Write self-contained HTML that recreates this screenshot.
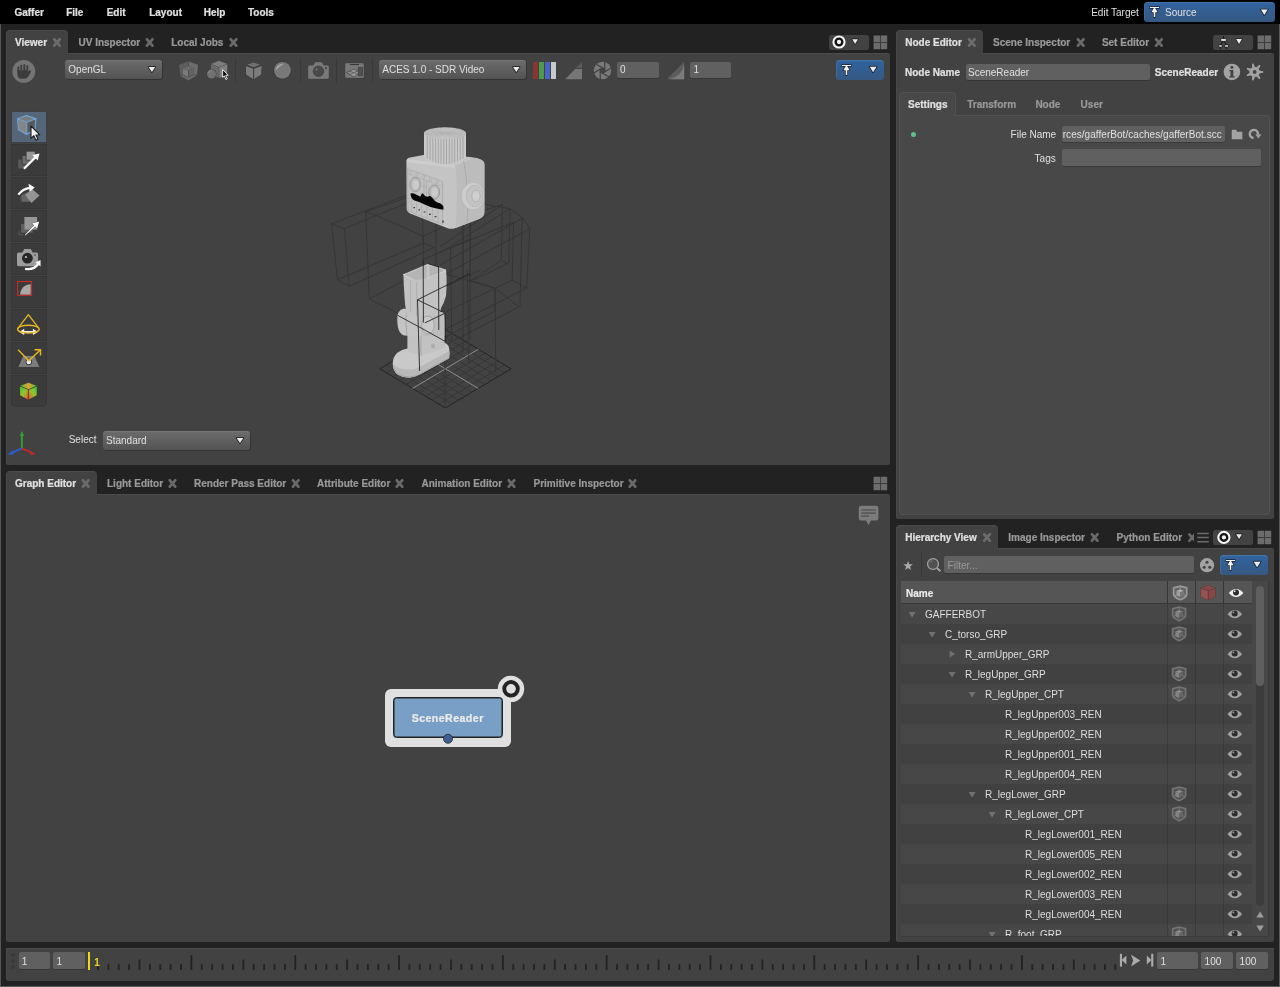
<!DOCTYPE html><html><head><meta charset="utf-8"><title>Gaffer</title><style>
*{box-sizing:border-box;margin:0;padding:0}
html,body{width:1280px;height:987px;overflow:hidden;background:#222;}
body{position:relative;font-family:"Liberation Sans",sans-serif;font-size:10px;color:#e0e0e0;line-height:12px;-webkit-font-smoothing:antialiased}
.a{position:absolute}
.b{font-weight:bold;-webkit-text-stroke:.22px currentColor}
.t{position:absolute;white-space:nowrap;height:12px;line-height:12px}
.panel{position:absolute;background:#424242;border-top:1px solid #4b4b4b;border-left:1px solid #494949}
.tab{position:absolute;background:#424242;border-radius:4px 4px 0 0;height:24px;border-top:1px solid #4a4a4a;border-left:1px solid #494949}
.fade{color:#999}
.fld{position:absolute;background:#606060;border-radius:2px;box-shadow:0 1px 0 rgba(0,0,0,.18)}
.dd{position:absolute;border-radius:3px;background:linear-gradient(#6b6b6b,#535353);border-top:1px solid #767676;box-shadow:1px 1px 0 rgba(0,0,0,.22)}
.blue{position:absolute;border-radius:3.5px;background:linear-gradient(#30629e,#365982);border-top:1px solid #4675aa;box-shadow:inset 1px 0 0 rgba(90,130,180,.35)}
.mini{position:absolute;background:#434343;border-radius:2.5px}
svg{position:absolute;overflow:visible}
</style></head><body><div id="root" style="position:absolute;left:0;top:0;width:1280px;height:987px;will-change:transform">
<div class="a" style="left:0;top:24px;width:1px;height:963px;background:#575757"></div>
<div class="a" style="left:1279px;top:24px;width:1px;height:963px;background:#5a5a5a"></div>
<div class="a" style="left:0;top:986px;width:1280px;height:1px;background:#5a5a5a"></div>
<div class="a" style="left:0;top:0;width:1280px;height:24px;background:#000"></div>
<div class="t b" style="left:14.4px;top:7px;">Gaffer</div>
<div class="t b" style="left:66.2px;top:7px;">File</div>
<div class="t b" style="left:106.7px;top:7px;">Edit</div>
<div class="t b" style="left:149.2px;top:7px;">Layout</div>
<div class="t b" style="left:203.7px;top:7px;">Help</div>
<div class="t b" style="left:248px;top:7px;">Tools</div>
<div class="t " style="left:1091.2px;top:7px;">Edit Target</div>
<div class="blue" style="left:1144px;top:2px;width:131px;height:20px"></div>
<svg style="left:1149px;top:6px" width="11" height="12" viewBox="0 0 11 12"><path d="M.9 .9H10.1V2.1H6.1L8.65 6.2H6.25V10.9H4.75V6.2H2.35L4.9 2.1H.9Z" fill="#f4f4f4" stroke="#1a2230" stroke-width="1.5" stroke-linejoin="round" paint-order="stroke"/></svg>
<div class="t " style="left:1165px;top:7px;">Source</div>
<svg style="left:1260px;top:9px" width="6.8" height="5.5" viewBox="-0.9 -0.6 6.8 5.5"><path d="M0 0H6.8L3.4 5.5Z" fill="#ececec" stroke="rgba(24,24,24,.75)" stroke-width="1.8" stroke-linejoin="round" paint-order="stroke"/></svg>
<div class="panel" style="left:6px;top:53px;width:884px;height:412px;border-radius:0 2.5px 2.5px 2px"></div>
<div class="tab" style="left:6px;top:30px;width:62.3px"></div>
<div class="panel" style="left:6px;top:494px;width:884px;height:448px;border-radius:0 2.5px 2.5px 2px"></div>
<div class="tab" style="left:6px;top:471px;width:90.5px"></div>
<div class="panel" style="left:896px;top:53px;width:378px;height:466px;border-radius:0 2.5px 2.5px 2px"></div>
<div class="tab" style="left:896px;top:30px;width:87px"></div>
<div class="panel" style="left:896px;top:548px;width:378px;height:394px;border-radius:0 2.5px 2.5px 2px"></div>
<div class="tab" style="left:896px;top:525px;width:101.6px"></div>
<div class="panel" style="left:6px;top:948px;width:1268px;height:33px;border-radius:0 0 3px 3px"></div>
<div class="t b" style="left:15px;top:37px;">Viewer</div>
<svg style="left:52px;top:37px" width="8.2" height="9.2" viewBox="-0.9 -0.9 8.2 9.2"><path d="M1.35 1.45L6.85 7.75M6.85 1.45L1.35 7.75" stroke="#6c6c6c" stroke-width="2.8" stroke-linecap="round"/></svg>
<div class="t b fade" style="left:78.5px;top:37px;">UV Inspector</div>
<svg style="left:145px;top:37px" width="8.2" height="9.2" viewBox="-0.6 -0.9 8.2 9.2"><path d="M1.35 1.45L6.85 7.75M6.85 1.45L1.35 7.75" stroke="#6a6a6a" stroke-width="2.8" stroke-linecap="round"/></svg>
<div class="t b fade" style="left:171.2px;top:37px;">Local Jobs</div>
<svg style="left:229px;top:37px" width="8.2" height="9.2" viewBox="-0.4 -0.9 8.2 9.2"><path d="M1.35 1.45L6.85 7.75M6.85 1.45L1.35 7.75" stroke="#6a6a6a" stroke-width="2.8" stroke-linecap="round"/></svg>
<div class="t b" style="left:15px;top:478px;">Graph Editor</div>
<svg style="left:81px;top:478px" width="8.2" height="9.2" viewBox="-0.6 -0.9 8.2 9.2"><path d="M1.35 1.45L6.85 7.75M6.85 1.45L1.35 7.75" stroke="#6c6c6c" stroke-width="2.8" stroke-linecap="round"/></svg>
<div class="t b fade" style="left:107px;top:478px;">Light Editor</div>
<svg style="left:168px;top:478px" width="8.2" height="9.2" viewBox="-0.4 -0.9 8.2 9.2"><path d="M1.35 1.45L6.85 7.75M6.85 1.45L1.35 7.75" stroke="#6a6a6a" stroke-width="2.8" stroke-linecap="round"/></svg>
<div class="t b fade" style="left:194px;top:478px;">Render Pass Editor</div>
<svg style="left:291px;top:478px" width="8.2" height="9.2" viewBox="-0.6 -0.9 8.2 9.2"><path d="M1.35 1.45L6.85 7.75M6.85 1.45L1.35 7.75" stroke="#6a6a6a" stroke-width="2.8" stroke-linecap="round"/></svg>
<div class="t b fade" style="left:317px;top:478px;">Attribute Editor</div>
<svg style="left:395px;top:478px" width="8.2" height="9.2" viewBox="-0.4 -0.9 8.2 9.2"><path d="M1.35 1.45L6.85 7.75M6.85 1.45L1.35 7.75" stroke="#6a6a6a" stroke-width="2.8" stroke-linecap="round"/></svg>
<div class="t b fade" style="left:421.5px;top:478px;">Animation Editor</div>
<svg style="left:507px;top:478px" width="8.2" height="9.2" viewBox="-0.4 -0.9 8.2 9.2"><path d="M1.35 1.45L6.85 7.75M6.85 1.45L1.35 7.75" stroke="#6a6a6a" stroke-width="2.8" stroke-linecap="round"/></svg>
<div class="t b fade" style="left:533.5px;top:478px;">Primitive Inspector</div>
<svg style="left:628px;top:478px" width="8.2" height="9.2" viewBox="-0.4 -0.9 8.2 9.2"><path d="M1.35 1.45L6.85 7.75M6.85 1.45L1.35 7.75" stroke="#6a6a6a" stroke-width="2.8" stroke-linecap="round"/></svg>
<div class="t b" style="left:905.2px;top:37px;">Node Editor</div>
<svg style="left:967px;top:37px" width="8.2" height="9.2" viewBox="-0.7 -0.9 8.2 9.2"><path d="M1.35 1.45L6.85 7.75M6.85 1.45L1.35 7.75" stroke="#6c6c6c" stroke-width="2.8" stroke-linecap="round"/></svg>
<div class="t b fade" style="left:993px;top:37px;">Scene Inspector</div>
<svg style="left:1076px;top:37px" width="8.2" height="9.2" viewBox="-0.6 -0.9 8.2 9.2"><path d="M1.35 1.45L6.85 7.75M6.85 1.45L1.35 7.75" stroke="#6a6a6a" stroke-width="2.8" stroke-linecap="round"/></svg>
<div class="t b fade" style="left:1101.9px;top:37px;">Set Editor</div>
<svg style="left:1154px;top:37px" width="8.2" height="9.2" viewBox="-0.8 -0.9 8.2 9.2"><path d="M1.35 1.45L6.85 7.75M6.85 1.45L1.35 7.75" stroke="#6a6a6a" stroke-width="2.8" stroke-linecap="round"/></svg>
<div class="t b" style="left:905.2px;top:532px;">Hierarchy View</div>
<svg style="left:982px;top:532px" width="8.2" height="9.2" viewBox="-0.9 -0.9 8.2 9.2"><path d="M1.35 1.45L6.85 7.75M6.85 1.45L1.35 7.75" stroke="#6c6c6c" stroke-width="2.8" stroke-linecap="round"/></svg>
<div class="t b fade" style="left:1008.3px;top:532px;">Image Inspector</div>
<svg style="left:1090px;top:532px" width="8.2" height="9.2" viewBox="-0.6 -0.9 8.2 9.2"><path d="M1.35 1.45L6.85 7.75M6.85 1.45L1.35 7.75" stroke="#6a6a6a" stroke-width="2.8" stroke-linecap="round"/></svg>
<div class="t b fade" style="left:1116.5px;top:532px;">Python Editor</div>
<div class="a" style="left:1188px;top:532.9px;width:5.9px;height:9.2px;overflow:hidden"><svg style="left:0;top:0" width="8.2" height="9.2" viewBox="0 0 8.2 9.2"><path d="M1.35 1.45L6.85 7.75M6.85 1.45L1.35 7.75" stroke="#6a6a6a" stroke-width="2.6" stroke-linecap="round"/></svg></div>
<div class="mini" style="left:829px;top:35px;width:40px;height:15px"></div>
<svg style="left:832px;top:35px" width="14" height="14" viewBox="-7 -7 14 14"><circle r="5.55" fill="#131313" stroke="#f8f8f8" stroke-width="2.1"/><circle r="2.15" fill="#f4f4f4"/></svg>
<svg style="left:852px;top:39px" width="5.8" height="4.7" viewBox="-0.2 -0.2 5.8 4.7"><path d="M0 0H5.8L2.9 4.7Z" fill="#ececec" stroke="rgba(24,24,24,.75)" stroke-width="1.8" stroke-linejoin="round" paint-order="stroke"/></svg>
<svg style="left:873px;top:35px" width="14" height="14" viewBox="-0.6 -0.6 14 14"><path d="M0 0H6.4V6.6H0ZM7.2 0H13.6V6.6H7.2ZM0 7.4H6.4V13.6H0ZM7.2 7.4H13.6V13.6H7.2Z" fill="#6c6c6c"/><path d="M6.8 0V13.6M0 7H13.6" stroke="#6c6c6c" stroke-opacity=".3" stroke-width=".8"/></svg>
<svg style="left:873px;top:476px" width="14" height="14" viewBox="-0.6 -0.7 14 14"><path d="M0 0H6.4V6.6H0ZM7.2 0H13.6V6.6H7.2ZM0 7.4H6.4V13.6H0ZM7.2 7.4H13.6V13.6H7.2Z" fill="#6c6c6c"/><path d="M6.8 0V13.6M0 7H13.6" stroke="#6c6c6c" stroke-opacity=".3" stroke-width=".8"/></svg>
<div class="mini" style="left:1213px;top:35px;width:40px;height:15px"></div>
<svg style="left:1236px;top:39px" width="5.9" height="4.8" viewBox="-0.1 -0.1 5.9 4.8"><path d="M0 0H5.9L2.95 4.8Z" fill="#ececec" stroke="rgba(24,24,24,.75)" stroke-width="1.8" stroke-linejoin="round" paint-order="stroke"/></svg>
<svg style="left:1257px;top:35px" width="14" height="14" viewBox="-0.6 -0.6 14 14"><path d="M0 0H6.4V6.6H0ZM7.2 0H13.6V6.6H7.2ZM0 7.4H6.4V13.6H0ZM7.2 7.4H13.6V13.6H7.2Z" fill="#6c6c6c"/><path d="M6.8 0V13.6M0 7H13.6" stroke="#6c6c6c" stroke-opacity=".3" stroke-width=".8"/></svg>
<div class="mini" style="left:1213px;top:530px;width:40px;height:15px"></div>
<svg style="left:1216px;top:530px" width="14" height="14" viewBox="-7.9 -7.4 14 14"><circle r="5.55" fill="#131313" stroke="#f8f8f8" stroke-width="2.1"/><circle r="2.15" fill="#f4f4f4"/></svg>
<svg style="left:1236px;top:534px" width="5.9" height="4.8" viewBox="-0.1 -0.2 5.9 4.8"><path d="M0 0H5.9L2.95 4.8Z" fill="#ececec" stroke="rgba(24,24,24,.75)" stroke-width="1.8" stroke-linejoin="round" paint-order="stroke"/></svg>
<svg style="left:1257px;top:530px" width="14" height="14" viewBox="-0.6 -0.7 14 14"><path d="M0 0H6.4V6.6H0ZM7.2 0H13.6V6.6H7.2ZM0 7.4H6.4V13.6H0ZM7.2 7.4H13.6V13.6H7.2Z" fill="#6c6c6c"/><path d="M6.8 0V13.6M0 7H13.6" stroke="#6c6c6c" stroke-opacity=".3" stroke-width=".8"/></svg>
<svg style="left:1197px;top:532px" width="12" height="12" viewBox="-0.2 0 12 12"><path d="M0 1.6H11.6M0 5.6H11.6M0 9.7H11.6" stroke="#6c6c6c" stroke-width="1.5"/></svg>
<svg style="left:1216px;top:34px" width="16" height="17" viewBox="1216 34 16 17"><g stroke="#131313" stroke-width=".9"><path d="M1223.5 36.1V38.1M1222.6 41.8L1220.8 44.2M1224.4 41.8L1226.3 44.2M1220.45 47.8V48.9M1226.55 47.8V48.9" stroke-width="1" fill="none"/><rect x="1220.7" y="38.6" width="5.6" height="2.7" rx=".7" fill="#fafafa"/><rect x="1218.75" y="44.65" width="3.4" height="2.7" rx=".6" fill="#cdcdcd"/><rect x="1224.65" y="44.65" width="3.8" height="2.7" rx=".6" fill="#cdcdcd"/></g></svg>
<svg style="left:12px;top:59px" width="23" height="23" viewBox="-11.8 -12.42 23 23"><circle r="11.4" fill="#747474"/>
<g fill="#3c3c3c"><rect x="-6.4" y="-5.2" width="1.8" height="7" rx=".9"/><rect x="-3.4" y="-6.7" width="1.8" height="8" rx=".9"/><rect x="-.4" y="-7.5" width="1.8" height="9" rx=".9"/><rect x="2.6" y="-6.4" width="1.8" height="8" rx=".9"/>
<path d="M-6.4 -1.2H4.4V1.4L5 -.4Q5.9 -1.6 6.8 -.9Q7.5 -.2 6.8 1L4.8 4.6Q3.4 7.4 .6 7.4H-2Q-6.4 7.2 -6.4 2.6Z"/></g></svg>
<div class="dd" style="left:65px;top:60px;width:97px;height:19px"></div>
<div class="t " style="left:68.3px;top:63.6px;">OpenGL</div>
<svg style="left:148px;top:66px" width="6.6" height="5.2" viewBox="-0.6 -0.9 6.6 5.2"><path d="M0 0H6.6L3.3 5.2Z" fill="#ececec" stroke="rgba(24,24,24,.75)" stroke-width="1.8" stroke-linejoin="round" paint-order="stroke"/></svg>
<svg style="left:174px;top:56px" width="60" height="30" viewBox="174 56 60 30">
<path d="M178.9 64.9L188 61.5V66L182.9 68.4V74.5L180.6 75.7Z" fill="#5e5e5e"/>
<path d="M198.1 64.7L188.7 61.5V66L193.7 68.4V74.5L197 74.75Z" fill="#6c6c6c"/>
<path d="M180.6 76.1L182.9 74.9L188.3 77.5L193.7 74.9L197 75.2L188.3 80.5Z" fill="#696969"/>
<path d="M182.9 68.4L188.3 66.1L193.7 68.4L188.3 70.4Z" fill="#6b6b6b"/>
<path d="M182.9 68.7L188.1 70.6V77L182.9 74.4Z" fill="#7a7a7a"/>
<path d="M193.7 68.7L188.6 70.6V77L193.7 74.4Z" fill="#636363"/>
<path d="M219 60.7L227.4 64L219 66.9L211 64Z" fill="#7c7c7c"/>
<path d="M211 64.4L218.7 67.2V77.9L211.4 74.8Z" fill="#6b6b6b"/>
<path d="M227.4 64.4L219.3 67.2V77.9L227 74.8Z" fill="#818181"/>
<circle cx="211.5" cy="74.1" r="5.1" fill="#424242"/><circle cx="211.5" cy="74.1" r="4.5" fill="#727272"/>
<path d="M208.4 72.6Q209.2 70.6 211.2 70.2" stroke="#8e8e8e" stroke-width=".9" fill="none" stroke-linecap="round"/>
<path d="M222.6 69.6V77.4L224.3 75.9L225.9 79.5L227.3 78.9L225.7 75.3L228.3 75.2Z" fill="#101010" stroke="#f2f2f2" stroke-width=".9" stroke-linejoin="round"/>
</svg>
<div class="a" style="left:235px;top:58px;width:1px;height:25px;background:#393939"></div>
<div class="a" style="left:300px;top:58px;width:1px;height:25px;background:#393939"></div>
<div class="a" style="left:336px;top:58px;width:1px;height:25px;background:#393939"></div>
<div class="a" style="left:372px;top:58px;width:1px;height:25px;background:#393939"></div>
<svg style="left:240px;top:56px" width="60" height="30" viewBox="240 56 60 30">
<path d="M253.6 62L261.9 65.2L261.5 74.9L253.6 79.8L245.7 74.9L245.4 65.2Z" fill="#3b3b3b" opacity=".8"/>
<path d="M253.6 62.6L260.4 64.8L253.6 67.3L247 64.8Z" fill="#707070"/>
<path d="M245.9 66L253.1 68.7V79L246.1 74.5Z" fill="#7c7c7c"/>
<path d="M261.6 66L254.1 68.7V79L261.1 74.5Z" fill="#7c7c7c"/>
<circle cx="282.4" cy="70.3" r="8.9" fill="#3a3a3a" opacity=".7"/><circle cx="282.4" cy="70.3" r="8.4" fill="#797979"/>
<path d="M276 69.9Q276.6 64.6 283.2 64Q278.8 66.6 276 69.9Z" fill="#adadad" stroke="#a4a4a4" stroke-width=".7"/>
</svg>
<svg style="left:304px;top:56px" width="64" height="32" viewBox="304 56 64 32">
<path d="M309.6 65.2H313.2L315.2 62H321.8L323.8 65.2H327.4Q329 65.2 329 66.8V77.4Q329 79 327.4 79H309.6Q308 79 308 77.4V66.8Q308 65.2 309.6 65.2Z" fill="#797979" stroke="#3a3a3a" stroke-opacity=".5" stroke-width=".6"/>
<circle cx="318.5" cy="71.3" r="5.3" fill="#494949" stroke="#3d3d3d" stroke-width=".7"/>
<path d="M316.5 68.6V70.4M315.6 69.5H317.4" stroke="#8a8a8a" stroke-width=".8"/>
<rect x="325.1" y="67.1" width="1.9" height="1.9" fill="#454545"/>
<rect x="345" y="63" width="19" height="15" rx="1.5" fill="#787878" stroke="#3a3a3a" stroke-opacity=".5" stroke-width=".6"/>
<path d="M350 64.5H359" stroke="#363636" stroke-width="1.1"/>
<path d="M346.4 72.5L354 69.3L360 72.5L354 76.7Z" fill="#8e8e8e" stroke="#444" stroke-width=".8"/>
<path d="M350.2 70.9L357 74.6M350.2 74.6L357 70.9" stroke="#4a4a4a" stroke-width=".8"/>
<path d="M354 69.3L357 70.9L354 72.6L350.2 70.9ZM354 72.6L357 74.6L354 76.7L350.2 74.6Z" fill="#a2a2a2" opacity=".5"/>
<rect x="358.3" y="67.3" width="4.4" height="8.4" fill="#505050" stroke="#414141" stroke-width=".7"/>
</svg>
<div class="dd" style="left:379px;top:60px;width:147px;height:19px"></div>
<div class="t " style="left:382.3px;top:63.6px;">ACES 1.0 - SDR Video</div>
<svg style="left:513px;top:66px" width="6.6" height="5.2" viewBox="0 -0.9 6.6 5.2"><path d="M0 0H6.6L3.3 5.2Z" fill="#ececec" stroke="rgba(24,24,24,.75)" stroke-width="1.8" stroke-linejoin="round" paint-order="stroke"/></svg>
<div class="a" style="left:533.1px;top:61.8px;width:5px;height:17.3px;background:#893535"></div>
<div class="a" style="left:539.1px;top:61.8px;width:5px;height:17.3px;background:#4b9b4b"></div>
<div class="a" style="left:545.1px;top:61.8px;width:5px;height:17.3px;background:#4a63c6"></div>
<div class="a" style="left:551.1px;top:61.8px;width:5px;height:17.3px;background:#c9c9c9"></div>
<svg style="left:565px;top:61px" width="17" height="17.4" viewBox="-0.2 -0.8 17 17.4"><path d="M16.8 0V6.3H10.7Z" fill="#5a5a5a"/><path d="M9.9 7.1H16.8V17.4H0Z" fill="#767676"/></svg>
<svg style="left:593px;top:61px" width="17.5" height="17.5" viewBox="-9.5 -9.5 17.5 17.5"><circle r="8.75" fill="#7a7a7a"/><path d="M2.31 -1.39L2.36 1.31L0.05 2.70L-2.31 1.39L-2.36 -1.31L-0.05 -2.70Z" fill="#444"/><path d="M2.36 1.31L2.19 -8.63M0.05 2.70L8.57 -2.42M-2.31 1.39L6.38 6.21M-2.36 -1.31L-2.19 8.63M-0.05 -2.70L-8.57 2.42M2.31 -1.39L-6.38 -6.21" stroke="#414141" stroke-width="1.15" fill="none"/></svg>
<div class="fld" style="left:617px;top:61.7px;width:41.5px;height:16.4px"></div>
<div class="t " style="left:620px;top:64px;">0</div>
<svg style="left:666px;top:61px" width="17.4" height="17.4" viewBox="-0.8 -0.8 17.4 17.4"><path d="M17.4 0V17.4H0Z" fill="#5c5c5c"/><path d="M17.4 2.4V17.4H3Q15 14.6 17.4 2.4Z" fill="#7b7b7b"/></svg>
<div class="fld" style="left:690px;top:61.7px;width:41.3px;height:16.4px"></div>
<div class="t " style="left:693.6px;top:64px;">1</div>
<div class="blue" style="left:836px;top:60px;width:48px;height:20px"></div>
<svg style="left:841px;top:64px" width="11" height="12" viewBox="0 0 11 12"><path d="M.9 .9H10.1V2.1H6.1L8.65 6.2H6.25V10.9H4.75V6.2H2.35L4.9 2.1H.9Z" fill="#f4f4f4" stroke="#1a2230" stroke-width="1.5" stroke-linejoin="round" paint-order="stroke"/></svg>
<svg style="left:869px;top:66px" width="6.8" height="5.5" viewBox="-0.7 -0.7 6.8 5.5"><path d="M0 0H6.8L3.4 5.5Z" fill="#ececec" stroke="rgba(24,24,24,.75)" stroke-width="1.8" stroke-linejoin="round" paint-order="stroke"/></svg>
<div class="a" style="left:11.3px;top:111.20px;width:35.4px;height:31.5px;background:#546678;border-radius:2.5px 2.5px 1px 1px;box-shadow:inset 0 0 0 .8px #363636"></div>
<div class="a" style="left:11.3px;top:144.20px;width:35.4px;height:31.5px;background:#3b3b3b;border-radius:1px;box-shadow:inset 0 0 0 .8px #363636"></div>
<div class="a" style="left:11.3px;top:177.20px;width:35.4px;height:31.5px;background:#3b3b3b;border-radius:1px;box-shadow:inset 0 0 0 .8px #363636"></div>
<div class="a" style="left:11.3px;top:210.20px;width:35.4px;height:31.5px;background:#3b3b3b;border-radius:1px;box-shadow:inset 0 0 0 .8px #363636"></div>
<div class="a" style="left:11.3px;top:243.20px;width:35.4px;height:31.5px;background:#3b3b3b;border-radius:1px;box-shadow:inset 0 0 0 .8px #363636"></div>
<div class="a" style="left:11.3px;top:276.20px;width:35.4px;height:31.5px;background:#3b3b3b;border-radius:1px;box-shadow:inset 0 0 0 .8px #363636"></div>
<div class="a" style="left:11.3px;top:309.20px;width:35.4px;height:31.5px;background:#3b3b3b;border-radius:1px;box-shadow:inset 0 0 0 .8px #363636"></div>
<div class="a" style="left:11.3px;top:342.20px;width:35.4px;height:31.5px;background:#3b3b3b;border-radius:1px;box-shadow:inset 0 0 0 .8px #363636"></div>
<div class="a" style="left:11.3px;top:375.20px;width:35.4px;height:31.5px;background:#3b3b3b;border-radius:1px 1px 5px 5px;box-shadow:inset 0 0 0 .8px #363636"></div>
<svg style="left:11px;top:111px" width="36" height="32" viewBox="-0.3 -0.2 36 32"><path d="M15 4.4L24.6 7.4L15.4 11L6.2 7.6Z" fill="#7a7a7a"/><path d="M6.2 7.6L15.4 11V23.4L7.2 18.6Z" fill="#858585"/><path d="M24.6 7.4L15.4 11V23.4L23.8 18.4Z" fill="#5a5a5a"/>
<path d="M15 4.4L24.6 7.4L23.8 18.4L15.4 23.4L7.2 18.6L6.2 7.6ZM6.2 7.6L15.4 11L24.6 7.4M15.4 11V23.4" fill="none" stroke="#70a2d2" stroke-width="1.2" stroke-linejoin="round"/>
<g transform="translate(19.7 14.8) scale(1.1)"><path d="M0 0V11.2L2.6 8.8L4.5 12.9L6.3 12.1L4.5 8.2L8 8Z" fill="#fafafa" stroke="#1c1c1c" stroke-width="1" stroke-linejoin="round"/></g></svg>
<svg style="left:11px;top:144px" width="36" height="32" viewBox="-0.3 -0.2 36 32"><rect x="6.8" y="15.4" width="8.8" height="8.8" fill="#5a5a5a"/><rect x="10.8" y="11.2" width="8.8" height="8.8" fill="#6e6e6e" stroke="#3b3b3b" stroke-width=".8"/><rect x="14.8" y="7" width="9" height="9" fill="#979797" stroke="#3b3b3b" stroke-width=".8"/><g transform="translate(28.2 9.2)"><path d="M0 0L-7.2 1.6L-5.2 3.4L-16.4 14.6L-14.8 16.2L-3.6 5L-1.8 7Z" fill="#fafafa"/></g></svg>
<svg style="left:11px;top:177px" width="36" height="32" viewBox="-0.3 -0.2 36 32"><path d="M9 20.6L14.6 16L18.4 24.8L9.6 24.8Z" fill="#555"/><path d="M10 18L17 14.6L20.6 24L11.2 24.2Z" fill="#666"/><path d="M14 17.9L20.7 11.7L28.3 18.4L20.1 25.7Z" fill="#959595"/>
<path d="M7.1 17.5Q11.2 11.4 18.8 10.6" fill="none" stroke="#fafafa" stroke-width="2.2"/><path d="M17.2 6.6L23.4 10.4L18.4 14.6Z" fill="#fafafa"/></svg>
<svg style="left:11px;top:210px" width="36" height="32" viewBox="-0.3 -0.2 36 32"><path d="M7.7 20.9V24.5H12.1" fill="none" stroke="#595959" stroke-width="1"/><path d="M9.7 13.9H13.1V19.5H21.4V22.5H9.7Z" fill="#606060"/><rect x="13.1" y="6.8" width="12.7" height="12.7" fill="#979797"/>
<path d="M27.9 11.4L20.6 13.4L22.8 15L13.5 24.7L14 25.2L24.2 16.4L25.8 18.6Z" fill="#fafafa" stroke="#2e2e2e" stroke-width=".7" stroke-linejoin="round" paint-order="stroke"/></svg>
<svg style="left:11px;top:243px" width="36" height="32" viewBox="-0.3 -0.2 36 32"><path d="M7.3 9.3H11.1L12.9 5.7H19.5L21.3 9.3H25.2Q26.8 9.3 26.8 10.9V21.4Q26.8 23 25.2 23H7.3Q5.7 23 5.7 21.4V10.9Q5.7 9.3 7.3 9.3Z" fill="#9c9c9c"/><circle cx="16.1" cy="15" r="5.4" fill="#262626"/><rect x="13.8" y="13" width="1.7" height="1.7" fill="#ddd"/><rect x="22.9" y="11" width="1.6" height="1.6" fill="#5a5a5a"/>
<path d="M13.8 25.6Q22 27.4 27.2 20.6" fill="none" stroke="#fafafa" stroke-width="2.3"/><path d="M24 19.4L29.2 16.9L29.3 23.4Z" fill="#fafafa"/></svg>
<svg style="left:11px;top:276px" width="36" height="32" viewBox="-0.3 -0.2 36 32"><path d="M8.8 18.55A10.6 10.6 0 0 1 19.4 7.95V18.55Z" fill="#a8a8a8"/><rect x="6.25" y="5.35" width="14" height="13.8" fill="none" stroke="#c42c2c" stroke-width="1.1"/></svg>
<svg style="left:11px;top:309px" width="36" height="32" viewBox="-0.3 -0.2 36 32"><path d="M12 22.7H22.4" stroke="#fafafa" stroke-width="1.7"/><path d="M7.9 22.7L12.9 19.5V25.9ZM26.6 22.7L21.6 19.5V25.9Z" fill="#fafafa"/>
<path d="M6.6 19.1L17.1 5.5L27.6 19.1" fill="none" stroke="#e8b820" stroke-width="1.3" stroke-linejoin="round"/><ellipse cx="17.1" cy="19.95" rx="10.8" ry="3.9" fill="none" stroke="#e8b820" stroke-width="1.35"/></svg>
<svg style="left:11px;top:342px" width="36" height="32" viewBox="-0.3 -0.2 36 32"><path d="M12 13.9H23.2L28.1 24.9H7Z" fill="#7c7c7c"/><circle cx="17.5" cy="19.7" r="2.9" fill="#ececec" stroke="#2c2c2c" stroke-width="1"/>
<path d="M6.8 7.6L17.5 18.6L29 7.8" fill="none" stroke="#e8b820" stroke-width="1.4" stroke-linejoin="round"/><path d="M23.2 7.6H29.2V13.3" fill="none" stroke="#e8b820" stroke-width="1.4"/></svg>
<svg style="left:11px;top:375px" width="36" height="32" viewBox="-0.3 -0.2 36 32"><defs><linearGradient id="vg1" x1="0" y1="0" x2="1" y2="1"><stop offset="0" stop-color="#30c838"/><stop offset=".5" stop-color="#9cc032"/><stop offset="1" stop-color="#ee4a26"/></linearGradient><linearGradient id="vg2" x1="1" y1="0" x2="0" y2="1"><stop offset="0" stop-color="#30c838"/><stop offset=".5" stop-color="#9cc032"/><stop offset="1" stop-color="#ee4a26"/></linearGradient><linearGradient id="vg3" x1="0" y1="0" x2="1" y2="0"><stop offset="0" stop-color="#48c436"/><stop offset=".5" stop-color="#e0a432"/><stop offset="1" stop-color="#48c436"/></linearGradient></defs>
<path d="M17.1 7.6L25.6 10.9L17.1 14.4L8.6 10.9Z" fill="url(#vg3)"/><path d="M8.6 11L17.1 14.4V24.6L8.8 20Z" fill="url(#vg1)"/><path d="M25.6 11L17.1 14.4V24.6L25.4 20Z" fill="url(#vg2)"/><path d="M8.6 10.9L17.1 14.4L25.6 10.9M17.1 14.4V24.6" fill="none" stroke="#2a2a2a" stroke-width=".8" opacity=".75"/></svg>
<div class="t " style="left:68.7px;top:433.6px;">Select</div>
<div class="dd" style="left:103px;top:431px;width:147px;height:19px"></div>
<div class="t " style="left:106px;top:434.6px;">Standard</div>
<svg style="left:236px;top:437px" width="6.6" height="5.2" viewBox="-0.7 -0.9 6.6 5.2"><path d="M0 0H6.6L3.3 5.2Z" fill="#ececec" stroke="rgba(24,24,24,.75)" stroke-width="1.8" stroke-linejoin="round" paint-order="stroke"/></svg>
<svg style="left:0;top:420px" width="50" height="45" viewBox="0 420 50 45"><path d="M21.9 448.4V434" stroke="#2ea02e" stroke-width="2"/><path d="M21.9 431L24.2 436H19.6Z" fill="#2ea02e"/>
<path d="M21.9 448.4L11 453.2" stroke="#2a5cd8" stroke-width="2"/><path d="M7.6 454.8L12.6 450.6L13.8 454.6Z" fill="#2a5cd8"/>
<path d="M21.9 448.4L32.6 453.2" stroke="#c02828" stroke-width="2"/><path d="M36 454.8L30.8 450.8L30 454.8Z" fill="#c02828"/></svg>
<svg style="left:300px;top:100px" width="260" height="330" viewBox="300 100 260 330"><path d="M379.8 368.8L445.3 408.0" fill="none" stroke="#242424" stroke-width="1"/><path d="M379.8 368.8L445.6 329.6" fill="none" stroke="#242424" stroke-width="1"/><path d="M386.4 364.9L451.9 404.1" fill="none" stroke="#333" stroke-width="0.8"/><path d="M386.4 372.7L452.2 333.5" fill="none" stroke="#333" stroke-width="0.8"/><path d="M393.0 361.0L458.5 400.2" fill="none" stroke="#333" stroke-width="0.8"/><path d="M392.9 376.6L458.7 337.4" fill="none" stroke="#333" stroke-width="0.8"/><path d="M399.5 357.0L465.1 396.2" fill="none" stroke="#333" stroke-width="0.8"/><path d="M399.4 380.6L465.3 341.4" fill="none" stroke="#333" stroke-width="0.8"/><path d="M406.1 353.1L471.7 392.3" fill="none" stroke="#333" stroke-width="0.8"/><path d="M406.0 384.5L471.8 345.3" fill="none" stroke="#333" stroke-width="0.8"/><path d="M419.3 345.3L484.8 384.5" fill="none" stroke="#333" stroke-width="0.8"/><path d="M419.1 392.3L485.0 353.1" fill="none" stroke="#333" stroke-width="0.8"/><path d="M425.9 341.4L491.4 380.6" fill="none" stroke="#333" stroke-width="0.8"/><path d="M425.6 396.2L491.5 357.0" fill="none" stroke="#333" stroke-width="0.8"/><path d="M432.4 337.4L498.0 376.6" fill="none" stroke="#333" stroke-width="0.8"/><path d="M432.2 400.2L498.1 361.0" fill="none" stroke="#333" stroke-width="0.8"/><path d="M439.0 333.5L504.6 372.7" fill="none" stroke="#333" stroke-width="0.8"/><path d="M438.8 404.1L504.6 364.9" fill="none" stroke="#333" stroke-width="0.8"/><path d="M445.6 329.6L511.2 368.8" fill="none" stroke="#242424" stroke-width="1"/><path d="M445.3 408.0L511.2 368.8" fill="none" stroke="#242424" stroke-width="1"/><path d="M412.7 349.2L478.2 388.4" fill="none" stroke="#a2a2a2" stroke-width="0.8"/><path d="M412.6 388.4L478.4 349.2" fill="none" stroke="#a2a2a2" stroke-width="0.8"/><path d="M331.5 223.8L406.3 195.2" fill="none" stroke="#343434" stroke-width="0.9"/><path d="M331.5 223.8L344.3 228.6" fill="none" stroke="#343434" stroke-width="0.9"/><path d="M344.3 228.6L407.0 203.0" fill="none" stroke="#343434" stroke-width="0.9"/><path d="M331.5 223.8L337.6 279.7" fill="none" stroke="#343434" stroke-width="0.9"/><path d="M344.3 228.6L349.2 286.4" fill="none" stroke="#343434" stroke-width="0.9"/><path d="M337.6 279.7L349.2 286.4" fill="none" stroke="#343434" stroke-width="0.9"/><path d="M337.6 279.7L423.3 243.2" fill="none" stroke="#343434" stroke-width="0.9"/><path d="M349.2 286.4L434.3 247.5" fill="none" stroke="#343434" stroke-width="0.9"/><path d="M423.3 243.2L434.3 247.5" fill="none" stroke="#343434" stroke-width="0.9"/><path d="M423.3 243.2L422.0 204.0" fill="none" stroke="#343434" stroke-width="0.9"/><path d="M365.6 211.9L407.0 197.5" fill="none" stroke="#343434" stroke-width="0.9"/><path d="M365.6 211.9L369.4 299.0" fill="none" stroke="#343434" stroke-width="0.9"/><path d="M365.6 211.9L377.1 215.9L423.3 236.0" fill="none" stroke="#343434" stroke-width="0.9"/><path d="M369.4 299.0L445.0 337.0" fill="none" stroke="#343434" stroke-width="0.9"/><path d="M369.4 299.0L423.3 270.0" fill="none" stroke="#343434" stroke-width="0.9"/><path d="M423.3 236.0L423.3 330.0" fill="none" stroke="#343434" stroke-width="0.9"/><path d="M423.3 236.0L484.0 207.0" fill="none" stroke="#343434" stroke-width="0.9"/><path d="M436.0 212.0L436.0 330.0" fill="none" stroke="#343434" stroke-width="0.9"/><path d="M463.0 225.0L463.0 352.0" fill="none" stroke="#343434" stroke-width="0.9"/><path d="M470.0 222.0L470.0 340.0" fill="none" stroke="#343434" stroke-width="0.9"/><path d="M445.0 337.0L495.0 311.0L495.0 288.0" fill="none" stroke="#343434" stroke-width="0.9"/><path d="M445.0 337.0L445.0 408.0" fill="none" stroke="#343434" stroke-width="0.9"/><path d="M483.6 210.3L502.3 204.7" fill="none" stroke="#343434" stroke-width="0.9"/><path d="M484.6 204.2L509.9 208.7L522.1 217.4L529.7 228.5" fill="none" stroke="#343434" stroke-width="0.9"/><path d="M502.3 204.7L501.3 259.9" fill="none" stroke="#343434" stroke-width="0.9"/><path d="M509.9 208.7L508.9 262.9" fill="none" stroke="#343434" stroke-width="0.9"/><path d="M522.1 217.4L520.0 307.0" fill="none" stroke="#343434" stroke-width="0.9"/><path d="M529.7 228.5L526.6 288.2" fill="none" stroke="#343434" stroke-width="0.9"/><path d="M513.5 222.4L512.1 280.1" fill="none" stroke="#343434" stroke-width="0.9"/><path d="M440.0 246.7L502.3 204.7" fill="none" stroke="#343434" stroke-width="0.9"/><path d="M440.0 252.8L509.9 208.7" fill="none" stroke="#343434" stroke-width="0.9"/><path d="M440.0 265.0L522.1 218.4" fill="none" stroke="#343434" stroke-width="0.9"/><path d="M451.1 247.8L513.0 222.4" fill="none" stroke="#343434" stroke-width="0.9"/><path d="M440.0 277.0L529.7 229.0" fill="none" stroke="#343434" stroke-width="0.9"/><path d="M470.4 280.7L501.3 260.4L508.0 263.9" fill="none" stroke="#343434" stroke-width="0.9"/><path d="M470.4 280.7L477.5 278.1L508.9 262.9" fill="none" stroke="#343434" stroke-width="0.9"/><path d="M463.3 223.4L462.8 278.1" fill="none" stroke="#343434" stroke-width="0.9"/><path d="M470.4 222.4L469.9 280.7" fill="none" stroke="#343434" stroke-width="0.9"/><path d="M450.6 247.8L451.7 340.0" fill="none" stroke="#343434" stroke-width="0.9"/><path d="M467.4 270.0L468.9 363.2" fill="none" stroke="#343434" stroke-width="0.9"/><path d="M495.2 288.2L495.7 372.0" fill="none" stroke="#343434" stroke-width="0.9"/><path d="M446.1 274.1L495.2 288.2L519.0 307.0" fill="none" stroke="#343434" stroke-width="0.9"/><path d="M440.0 289.3L480.5 270.0" fill="none" stroke="#343434" stroke-width="0.9"/><path d="M440.0 314.6L512.4 280.1L526.6 288.2" fill="none" stroke="#343434" stroke-width="0.9"/><path d="M440.0 331.8L526.6 288.2" fill="none" stroke="#343434" stroke-width="0.9"/><path d="M455.2 339.9L519.0 307.0" fill="none" stroke="#343434" stroke-width="0.9"/><path d="M469.9 280.1L495.2 288.2" fill="none" stroke="#343434" stroke-width="0.9"/>
<path d="M392.8 363.8Q392.6 357.5 397 353Q401.5 349.6 408.3 348.3L443.8 342.8Q448 343 449.3 349Q449.8 354 449.1 358.3L421 373.8Q415 377 410.1 377.5Q403 378 397.5 374.6Q393.2 371 392.8 363.8Z" fill="#c9c9c9"/>
<path d="M392.8 363.8Q397 369.5 410 369.6Q416 369.4 421 366.2L449.3 351Q449.8 354 449.1 358.3L421 373.8Q415 377 410.1 377.5Q403 378 397.5 374.6Q393.2 371 392.8 363.8Z" fill="#b8b8b8"/>
<path d="M393.4 368Q397 376.6 410 377Q416 376.6 421 373.4L449 358" fill="none" stroke="#a4a4a4" stroke-width="1"/>
<path d="M407.4 318H444.6V348L421 356L407.4 351Z" fill="#c2c2c2"/><path d="M421 322V356" stroke="#a9a9a9" stroke-width="1"/>
<ellipse cx="433" cy="346" rx="2" ry="2.4" fill="#adadad"/>
<path d="M397.3 322Q396.4 310 404 308.6L421 314V336L404 335.6Q397.6 333 397.3 322Z" fill="#c4c4c4"/><path d="M406.6 309.6Q405 322 407 335.6" stroke="#a8a8a8" stroke-width="1" fill="none"/>
<path d="M421 312H444.6V336H421Z" fill="#bdbdbd"/><ellipse cx="428" cy="325" rx="6.4" ry="9" fill="#c9c9c9" stroke="#a6a6a6" stroke-width="1"/>
<path d="M403.4 274.3L428 263.8L446 269.5Q447.2 281 446 296Q444 303 441 308L440 315L407 317Q404.6 303 404.4 295Q403.6 284 403.4 274.3Z" fill="#c3c3c3"/>
<path d="M403.4 274.3Q416 283.6 446 270.4" fill="none" stroke="#dcdcdc" stroke-width="1.3"/>
<path d="M404.4 275.4L428 265L445.4 270.4Q425 279.4 416.6 280Z" fill="#b4b4b4"/>
<path d="M410.6 280V312M416.6 281.6V316" stroke="#adadad" stroke-width=".9"/>
<path d="M428 265V279" stroke="#d6d6d6" stroke-width="3" opacity=".5"/>

<path d="M406.4 162Q406 158.4 410 157.6L432 153.4L470 157Q484.4 158.6 484.4 164V212Q484.4 217 479 219L455 228.2Q451 229.6 447 228L410 213.4Q406.6 212 406.6 208Z" fill="#c4c4c4"/>
<path d="M455.6 166Q458 190 455.6 228L479 219Q484.4 217 484.4 212V164Q484 159 474 158Z" fill="#bcbcbc"/>
<path d="M407 160.6L455 166.4" stroke="#d4d4d4" stroke-width="3" opacity=".6"/>
<path d="M463.6 161Q469.6 190 467 223.6" fill="none" stroke="#a4a4a4" stroke-width=".8"/>
<path d="M424 133V156.4Q426 161.6 436 163.8Q446 165.6 456 163.6Q464 161.4 466 156.4V133Z" fill="#c9c9c9"/>
<path d="M427.3 134.2V159.0" stroke="#a2a2a2" stroke-width=".9"/><path d="M430.1 135.4V160.3" stroke="#a2a2a2" stroke-width=".9"/><path d="M432.8 136.5V161.5" stroke="#a2a2a2" stroke-width=".9"/><path d="M435.6 137.5V162.5" stroke="#a2a2a2" stroke-width=".9"/><path d="M438.3 138.2V163.3" stroke="#a2a2a2" stroke-width=".9"/><path d="M441.0 138.7V163.9" stroke="#a2a2a2" stroke-width=".9"/><path d="M443.8 139.0V164.2" stroke="#a2a2a2" stroke-width=".9"/><path d="M446.5 139.0V164.2" stroke="#a2a2a2" stroke-width=".9"/><path d="M449.3 138.7V163.9" stroke="#a2a2a2" stroke-width=".9"/><path d="M452.0 138.2V163.3" stroke="#a2a2a2" stroke-width=".9"/><path d="M454.7 137.5V162.5" stroke="#a2a2a2" stroke-width=".9"/><path d="M457.5 136.5V161.5" stroke="#a2a2a2" stroke-width=".9"/><path d="M460.2 135.4V160.3" stroke="#a2a2a2" stroke-width=".9"/><path d="M463.0 134.2V159.0" stroke="#a2a2a2" stroke-width=".9"/>
<ellipse cx="445" cy="133.2" rx="21" ry="6" fill="#c2c2c2"/><path d="M445 133.2L465.6 133.2" stroke="#b2b2b2" stroke-width=".6"/><path d="M445 133.2L464.9 134.7" stroke="#b2b2b2" stroke-width=".6"/><path d="M445 133.2L462.8 136.1" stroke="#b2b2b2" stroke-width=".6"/><path d="M445 133.2L459.6 137.3" stroke="#b2b2b2" stroke-width=".6"/><path d="M445 133.2L455.3 138.2" stroke="#b2b2b2" stroke-width=".6"/><path d="M445 133.2L450.3 138.8" stroke="#b2b2b2" stroke-width=".6"/><path d="M445 133.2L445.0 139.0" stroke="#b2b2b2" stroke-width=".6"/><path d="M445 133.2L439.7 138.8" stroke="#b2b2b2" stroke-width=".6"/><path d="M445 133.2L434.7 138.2" stroke="#b2b2b2" stroke-width=".6"/><path d="M445 133.2L430.4 137.3" stroke="#b2b2b2" stroke-width=".6"/><path d="M445 133.2L427.2 136.1" stroke="#b2b2b2" stroke-width=".6"/><path d="M445 133.2L425.1 134.7" stroke="#b2b2b2" stroke-width=".6"/><path d="M445 133.2L424.4 133.2" stroke="#b2b2b2" stroke-width=".6"/><path d="M445 133.2L425.1 131.7" stroke="#b2b2b2" stroke-width=".6"/><path d="M445 133.2L427.2 130.3" stroke="#b2b2b2" stroke-width=".6"/><path d="M445 133.2L430.4 129.1" stroke="#b2b2b2" stroke-width=".6"/><path d="M445 133.2L434.7 128.2" stroke="#b2b2b2" stroke-width=".6"/><path d="M445 133.2L439.7 127.6" stroke="#b2b2b2" stroke-width=".6"/><path d="M445 133.2L445.0 127.4" stroke="#b2b2b2" stroke-width=".6"/><path d="M445 133.2L450.3 127.6" stroke="#b2b2b2" stroke-width=".6"/><path d="M445 133.2L455.3 128.2" stroke="#b2b2b2" stroke-width=".6"/><path d="M445 133.2L459.6 129.1" stroke="#b2b2b2" stroke-width=".6"/><path d="M445 133.2L462.8 130.3" stroke="#b2b2b2" stroke-width=".6"/><path d="M445 133.2L464.9 131.7" stroke="#b2b2b2" stroke-width=".6"/>
<path d="M407.6 168.6L442.6 181.6V224.4L408 211Z" fill="#c1c1c1" stroke="#a8a8a8" stroke-width=".7"/>
<path d="M408 174L442.6 186.6M408.4 197.6L442.6 210.6" stroke="#acacac" stroke-width=".6"/>
<ellipse cx="415.2" cy="184.6" rx="5.4" ry="7.2" fill="#bdbdbd" stroke="#9a9a9a" stroke-width="1"/><ellipse cx="415.6" cy="184.6" rx="3.9" ry="5.6" fill="#cacaca" stroke="#a8a8a8" stroke-width=".7"/>
<ellipse cx="434.2" cy="192.2" rx="5.4" ry="7.2" fill="#bdbdbd" stroke="#9a9a9a" stroke-width="1"/><ellipse cx="434.6" cy="192.2" rx="3.9" ry="5.6" fill="#cacaca" stroke="#a8a8a8" stroke-width=".7"/>
<g fill="#cdcdcd" stroke="#a0a0a0" stroke-width=".6"><circle cx="410.6" cy="172.4" r="1.3"/><circle cx="417" cy="174.8" r="1.3"/><circle cx="423.6" cy="177.2" r="1.3"/><circle cx="430.2" cy="179.8" r="1.3"/><circle cx="437" cy="182.2" r="1.3"/><circle cx="424.2" cy="186" r="1.2"/></g>
<path d="M424 180V198M426.6 181V199" stroke="#aaa" stroke-width=".7"/>
<path d="M410.4 193.6Q413 192.6 416 194.6L420.4 196.8Q421.4 192.6 423 193.4Q425 197 428 196.6Q430.6 194.8 432 197.6Q434.6 201.4 437.4 202.4Q441.4 202.8 443.4 206.6V209.8L436.6 208.4Q429.6 207.4 424.6 204.6Q419 201.4 414.4 200.6Q411 199.2 410.4 193.6Z" fill="#050505"/>
<path d="M411.6 200V211.6M416.6 202V213.6M421.6 204V215.6M427 206V218M432.6 208.4V220M438 210.4V222.4" stroke="#aaa" stroke-width=".7"/>
<path d="M413.4 207.6h1.6M418.4 209.8h1.6M423.6 212h1.8M429 214.4h1.8M434.6 216.6h1.8" stroke="#3a3a3a" stroke-width="1.2"/>
<rect x="442.4" y="220.6" width="1.2" height="2" fill="#111"/>
<ellipse cx="467" cy="196.4" rx="7" ry="11.6" fill="#bababa"/><path d="M467 184.8L473 183.4V209L467 208Z" fill="#c4c4c4"/><ellipse cx="473" cy="196" rx="11" ry="13" fill="#cdcdcd"/><ellipse cx="474.6" cy="196" rx="8.4" ry="10.6" fill="#c3c3c3" stroke="#b2b2b2" stroke-width=".8"/><ellipse cx="476" cy="196" rx="4.2" ry="5.8" fill="#cecece" stroke="#adadad" stroke-width=".8"/>
<path d="M417.5 299.8L470.0 273.5" fill="none" stroke="#242424" stroke-width="0.9"/><path d="M417.5 299.8L445.1 313.2" fill="none" stroke="#242424" stroke-width="0.9"/><path d="M417.5 299.8L419.6 371.0" fill="none" stroke="#242424" stroke-width="0.9"/><path d="M424.8 322.9L445.1 313.2" fill="none" stroke="#242424" stroke-width="0.9"/><path d="M398.1 315.6L424.8 330.0L445.6 341.6" fill="none" stroke="#242424" stroke-width="0.9"/><path d="M423.2 259.7L423.4 322.6" fill="none" stroke="#242424" stroke-width="0.9"/><path d="M438.6 266.0L438.8 330.0" fill="none" stroke="#242424" stroke-width="0.9"/><path d="M423.2 259.7L470.0 239.0" fill="none" stroke="#343434" stroke-width="0.9"/><path d="M428.0 263.6L438.6 267.0" fill="none" stroke="#242424" stroke-width="0.9"/><path d="M445.1 313.2L445.4 341.0" fill="none" stroke="#242424" stroke-width="0.8"/></svg>
<svg style="left:858px;top:505px" width="20" height="20" viewBox="-0.8 -0.8 20 20"><path d="M2.4 0H17.2Q19.6 0 19.6 2.4V12.4Q19.6 14.8 17.2 14.8H12.2L9.7 19.2L7.2 14.8H2.4Q0 14.8 0 12.4V2.4Q0 0 2.4 0Z" fill="#7c7c7c"/><path d="M2.4 4.2H17M2.4 7.3H17M2.4 10.3H10.2" stroke="#5a5a5a" stroke-width="1.6"/></svg>
<div class="a" style="left:385.03px;top:689.11px;width:126.28px;height:57.80px;background:#e0e0e0;border-radius:6px"></div>
<svg style="left:497px;top:674px" width="28" height="28" viewBox="-14.03 -14.83 28 28"><circle r="13.2" fill="#e0e0e0"/><circle r="6.8" fill="#e0e0e0" stroke="#232323" stroke-width="3.9"/></svg>
<div class="a" style="left:393.19px;top:697.41px;width:109.69px;height:40.78px;background:#7a9fc6;border-radius:3.5px;border:1px solid #222;box-shadow:inset 0 0 0 .5px #222"></div>
<svg style="left:442px;top:732px" width="12" height="12" viewBox="-6.03 -6.75 12 12"><circle r="4.5" fill="#3e5f90" stroke="#222" stroke-width=".8"/></svg>
<div class="t b" style="left:410.91px;top:710.94px;height:14px;line-height:14px;font-size:10.6px;color:#ececec;width:73.55px;text-align:center;letter-spacing:.45px;transform:scaleX(1.0)">SceneReader</div>
<div class="t b" style="left:905px;top:67px;">Node Name</div>
<div class="fld" style="left:965.5px;top:63.5px;width:184.8px;height:16.5px"></div>
<div class="t " style="left:968px;top:67px;">SceneReader</div>
<div class="t b" style="left:1154.8px;top:67px;">SceneReader</div>
<svg style="left:1223px;top:63px" width="17" height="17" viewBox="-8.9 -8.95 17 17"><circle r="8.3" fill="#a3a3a3"/><circle cx="0" cy="-4.6" r="1.5" fill="#424242"/><path d="M-2.6 -2H1.4V4.2H2.8V5.6H-2.8V4.2H-1.4V-.6H-2.6Z" fill="#424242"/></svg>
<svg style="left:1245px;top:63px" width="17.4" height="17.4" viewBox="-9.6 -9 17.4 17.4"><path d="M-1.5 -4.4L-.7 -8.6H.7L1.5 -4.4Z" fill="#a3a3a3" transform="rotate(90.00)"/><path d="M-1.5 -4.4L-.7 -8.6H.7L1.5 -4.4Z" fill="#a3a3a3" transform="rotate(141.43)"/><path d="M-1.5 -4.4L-.7 -8.6H.7L1.5 -4.4Z" fill="#a3a3a3" transform="rotate(192.86)"/><path d="M-1.5 -4.4L-.7 -8.6H.7L1.5 -4.4Z" fill="#a3a3a3" transform="rotate(244.29)"/><path d="M-1.5 -4.4L-.7 -8.6H.7L1.5 -4.4Z" fill="#a3a3a3" transform="rotate(295.71)"/><path d="M-1.5 -4.4L-.7 -8.6H.7L1.5 -4.4Z" fill="#a3a3a3" transform="rotate(347.14)"/><path d="M-1.5 -4.4L-.7 -8.6H.7L1.5 -4.4Z" fill="#a3a3a3" transform="rotate(398.57)"/><circle r="5" fill="#a3a3a3"/><circle r="2" fill="#424242"/></svg>
<div class="a" style="left:899.4px;top:115px;width:370.8px;height:400px;background:#484848;border:1px solid #515151;border-radius:0 3px 3px 3px"></div>
<div class="a" style="left:899.4px;top:92.4px;width:57px;height:24px;background:#484848;border:1px solid #515151;border-bottom:none;border-radius:4px 4px 0 0"></div>
<div class="t b" style="left:908px;top:99.4px;">Settings</div>
<div class="t b fade" style="left:967.2px;top:99.4px;">Transform</div>
<div class="t b fade" style="left:1035.4px;top:99.4px;">Node</div>
<div class="t b fade" style="left:1080.6px;top:99.4px;">User</div>
<div class="a" style="left:910.6px;top:131.5px;width:5px;height:5px;border-radius:50%;background:#5fc088"></div>
<div class="t " style="left:1010.6px;top:129px;">File Name</div>
<div class="t " style="left:1034.6px;top:153px;">Tags</div>
<div class="fld" style="left:1062.4px;top:125.5px;width:162.6px;height:16.5px;overflow:hidden"><div class="t" style="right:3.2px;top:3.5px;letter-spacing:.045px">rces/gafferBot/caches/gafferBot.scc</div></div>
<div class="fld" style="left:1062.4px;top:149.4px;width:198.8px;height:16.6px"></div>
<svg style="left:1231px;top:129px" width="11" height="10" viewBox="-0.75 -0.75 11 10"><path d="M0 .7Q0 0 .7 0H4.4L5.2 2H10Q10.6 2 10.6 2.6V9.5H0Z" fill="#a3a3a3"/></svg>
<svg style="left:1246px;top:126px" width="18" height="16" viewBox="1246 126 18 16"><path d="M1257.95 134.3A4.1 4.1 0 1 0 1253.6 138.05" fill="none" stroke="#a3a3a3" stroke-width="2.4"/><path d="M1255.3 134.2H1261.4L1258.4 138.5Z" fill="#a3a3a3"/></svg>
<svg style="left:900px;top:556px" width="16" height="16" viewBox="900 556 16 16"><path d="M908.10 560.90L909.33 564.20L912.86 564.35L910.10 566.55L911.04 569.95L908.10 568.00L905.16 569.95L906.10 566.55L903.34 564.35L906.87 564.20Z" fill="#ababab"/></svg>
<div class="a" style="left:921px;top:553px;width:1px;height:24px;background:#383838"></div>
<svg style="left:925px;top:556px" width="20" height="18" viewBox="925 556 20 18"><circle cx="933" cy="564" r="5.45" fill="#505050" stroke="#a2a2a2" stroke-width="1.25"/><path d="M937 568L940.4 571.2" stroke="#a2a2a2" stroke-width="1.9"/><path d="M930.2 562.4Q930.8 561.2 932 560.8" stroke="#8c8c8c" stroke-width="1" fill="none"/></svg>
<div class="fld" style="left:944.2px;top:556.2px;width:250px;height:16.7px"></div>
<div class="t " style="left:947.6px;top:559.6px;color:#9a9a9a">Filter...</div>
<svg style="left:1199px;top:558px" width="14.4" height="14.4" viewBox="-8 -7.2 14.4 14.4"><circle r="7.1" fill="#a3a3a3"/><circle cx="0" cy="-2.9" r="1.55" fill="#424242"/><circle cx="-2.8" cy="2" r="1.55" fill="#424242"/><circle cx="2.8" cy="2" r="1.55" fill="#424242"/></svg>
<div class="blue" style="left:1220px;top:555px;width:48px;height:20px"></div>
<svg style="left:1225px;top:559px" width="11" height="12" viewBox="0 0 11 12"><path d="M.9 .9H10.1V2.1H6.1L8.65 6.2H6.25V10.9H4.75V6.2H2.35L4.9 2.1H.9Z" fill="#f4f4f4" stroke="#1a2230" stroke-width="1.5" stroke-linejoin="round" paint-order="stroke"/></svg>
<svg style="left:1253px;top:561px" width="6.8" height="5.5" viewBox="-0.7 -0.7 6.8 5.5"><path d="M0 0H6.8L3.4 5.5Z" fill="#ececec" stroke="rgba(24,24,24,.75)" stroke-width="1.8" stroke-linejoin="round" paint-order="stroke"/></svg>
<div class="a" style="left:901px;top:581px;width:368px;height:355.6px;background:#474747;border-right:1px solid #3c3c3c;border-bottom:1px solid #3c3c3c;overflow:hidden" id="tree">
<div class="a" style="left:0;top:0;width:351px;height:23px;background:#555;border-bottom:1px solid #383838"></div>
<div class="a" style="left:266.4px;top:0;width:1px;height:356px;background:#3d3d3d"></div>
<div class="a" style="left:294.4px;top:0;width:1px;height:356px;background:#3d3d3d"></div>
<div class="a" style="left:322.4px;top:0;width:1px;height:356px;background:#3d3d3d"></div>
<div class="t b" style="left:5px;top:6.6px;color:#eaeaea">Name</div>
<svg style="left:271px;top:4px;opacity:1" width="15" height="15" viewBox="-8.2 -8 15 15">
<path d="M0 -6.9L6.5 -5.1V1.4Q6.3 4.3 0 6.8Q-6.3 4.3 -6.5 1.4V-5.1Z" fill="#646464" stroke="#9a9a9a" stroke-width="1.7" stroke-linejoin="round"/>
<path d="M0 -6.4V-3M-5.8 2.8L-3.2 1.4M5.8 2.8L3.2 1.4" stroke="#9a9a9a" stroke-width=".9"/>
<path d="M0 -3.6L3.7 -2.2L0 -.8L-3.7 -2.2Z" fill="#b4b4b4"/><path d="M-3.7 -2.2L0 -.8V4.1L-3.7 2.4Z" fill="#9e9e9e"/><path d="M3.7 -2.2L0 -.8V4.1L3.7 2.4Z" fill="#787878"/></svg>
<svg style="left:299px;top:4px" width="15.2" height="15.4" viewBox="-0.6 -0.2 15.2 15.4"><path d="M7.6 0L15.2 2.7V11.6L7.6 15.4L0 11.6V2.7Z" fill="#5e3636"/><path d="M7.6 .3L14.4 2.8L7.6 5.4L.8 2.8Z" fill="#864a4a"/><path d="M.4 3.3L7.2 5.9V14.8L.4 11.4Z" fill="#945252"/><path d="M14.8 3.3L8 5.9V14.8L14.8 11.4Z" fill="#844848"/></svg>
<svg style="left:327px;top:7px" width="14.8" height="8.4" viewBox="-8.1 -5 14.8 8.4"><path d="M-7.3 .1Q-3.8 -4.1 0 -4.1Q3.8 -4.1 7.3 .1Q3.8 4.1 0 4.1Q-3.8 4.1 -7.3 .1Z" fill="#f0f0f0"/><circle cx="-.1" cy="-.5" r="3" fill="#2c2c2c"/><circle cx="-1.4" cy="-1.7" r=".95" fill="#f0f0f0" opacity=".9"/></svg>
<div class="a" style="left:0;top:23px;width:351px;height:20px;background:#474747"></div>
<div class="t" style="left:24px;top:28.4px;color:#dedede">GAFFERBOT</div>
<svg style="left:7px;top:30px" width="7" height="6" viewBox="-0.6 -0.9 7 6"><path d="M0 0H7L3.5 5.7Z" fill="#717171"/></svg>
<svg style="left:270px;top:25px;opacity:1" width="15" height="15" viewBox="-8.1 -7.9 15 15">
<path d="M0 -6.9L6.5 -5.1V1.4Q6.3 4.3 0 6.8Q-6.3 4.3 -6.5 1.4V-5.1Z" fill="#545454" stroke="#747474" stroke-width="1.7" stroke-linejoin="round"/>
<path d="M0 -6.4V-3M-5.8 2.8L-3.2 1.4M5.8 2.8L3.2 1.4" stroke="#747474" stroke-width=".9"/>
<path d="M0 -3.6L3.7 -2.2L0 -.8L-3.7 -2.2Z" fill="#929292"/><path d="M-3.7 -2.2L0 -.8V4.1L-3.7 2.4Z" fill="#848484"/><path d="M3.7 -2.2L0 -.8V4.1L3.7 2.4Z" fill="#666"/></svg>
<svg style="left:326px;top:28px" width="14.8" height="8.4" viewBox="-7.8 -5.1 14.8 8.4"><path d="M-7.3 .1Q-3.8 -4.1 0 -4.1Q3.8 -4.1 7.3 .1Q3.8 4.1 0 4.1Q-3.8 4.1 -7.3 .1Z" fill="#a2a2a2"/><circle cx="-.1" cy="-.5" r="3" fill="#2c2c2c"/><circle cx="-1.4" cy="-1.7" r=".95" fill="#a2a2a2" opacity=".9"/></svg>
<div class="a" style="left:0;top:43px;width:351px;height:20px;background:#414141"></div>
<div class="t" style="left:44px;top:48.4px;color:#dedede">C_torso_GRP</div>
<svg style="left:27px;top:50px" width="7" height="6" viewBox="-0.6 -0.9 7 6"><path d="M0 0H7L3.5 5.7Z" fill="#717171"/></svg>
<svg style="left:270px;top:45px;opacity:1" width="15" height="15" viewBox="-8.1 -7.9 15 15">
<path d="M0 -6.9L6.5 -5.1V1.4Q6.3 4.3 0 6.8Q-6.3 4.3 -6.5 1.4V-5.1Z" fill="#545454" stroke="#747474" stroke-width="1.7" stroke-linejoin="round"/>
<path d="M0 -6.4V-3M-5.8 2.8L-3.2 1.4M5.8 2.8L3.2 1.4" stroke="#747474" stroke-width=".9"/>
<path d="M0 -3.6L3.7 -2.2L0 -.8L-3.7 -2.2Z" fill="#929292"/><path d="M-3.7 -2.2L0 -.8V4.1L-3.7 2.4Z" fill="#848484"/><path d="M3.7 -2.2L0 -.8V4.1L3.7 2.4Z" fill="#666"/></svg>
<svg style="left:326px;top:48px" width="14.8" height="8.4" viewBox="-7.8 -5.1 14.8 8.4"><path d="M-7.3 .1Q-3.8 -4.1 0 -4.1Q3.8 -4.1 7.3 .1Q3.8 4.1 0 4.1Q-3.8 4.1 -7.3 .1Z" fill="#a2a2a2"/><circle cx="-.1" cy="-.5" r="3" fill="#2c2c2c"/><circle cx="-1.4" cy="-1.7" r=".95" fill="#a2a2a2" opacity=".9"/></svg>
<div class="a" style="left:0;top:63px;width:351px;height:20px;background:#474747"></div>
<div class="t" style="left:64px;top:68.4px;color:#dedede">R_armUpper_GRP</div>
<svg style="left:48px;top:69px" width="6" height="7" viewBox="-0.6 -0.6 6 7"><path d="M0 0V7L5.4 3.5Z" fill="#717171"/></svg>
<svg style="left:326px;top:68px" width="14.8" height="8.4" viewBox="-7.8 -5.1 14.8 8.4"><path d="M-7.3 .1Q-3.8 -4.1 0 -4.1Q3.8 -4.1 7.3 .1Q3.8 4.1 0 4.1Q-3.8 4.1 -7.3 .1Z" fill="#a2a2a2"/><circle cx="-.1" cy="-.5" r="3" fill="#2c2c2c"/><circle cx="-1.4" cy="-1.7" r=".95" fill="#a2a2a2" opacity=".9"/></svg>
<div class="a" style="left:0;top:83px;width:351px;height:20px;background:#414141"></div>
<div class="t" style="left:64px;top:88.4px;color:#dedede">R_legUpper_GRP</div>
<svg style="left:47px;top:90px" width="7" height="6" viewBox="-0.6 -0.9 7 6"><path d="M0 0H7L3.5 5.7Z" fill="#717171"/></svg>
<svg style="left:270px;top:85px;opacity:1" width="15" height="15" viewBox="-8.1 -7.9 15 15">
<path d="M0 -6.9L6.5 -5.1V1.4Q6.3 4.3 0 6.8Q-6.3 4.3 -6.5 1.4V-5.1Z" fill="#545454" stroke="#747474" stroke-width="1.7" stroke-linejoin="round"/>
<path d="M0 -6.4V-3M-5.8 2.8L-3.2 1.4M5.8 2.8L3.2 1.4" stroke="#747474" stroke-width=".9"/>
<path d="M0 -3.6L3.7 -2.2L0 -.8L-3.7 -2.2Z" fill="#929292"/><path d="M-3.7 -2.2L0 -.8V4.1L-3.7 2.4Z" fill="#848484"/><path d="M3.7 -2.2L0 -.8V4.1L3.7 2.4Z" fill="#666"/></svg>
<svg style="left:326px;top:88px" width="14.8" height="8.4" viewBox="-7.8 -5.1 14.8 8.4"><path d="M-7.3 .1Q-3.8 -4.1 0 -4.1Q3.8 -4.1 7.3 .1Q3.8 4.1 0 4.1Q-3.8 4.1 -7.3 .1Z" fill="#a2a2a2"/><circle cx="-.1" cy="-.5" r="3" fill="#2c2c2c"/><circle cx="-1.4" cy="-1.7" r=".95" fill="#a2a2a2" opacity=".9"/></svg>
<div class="a" style="left:0;top:103px;width:351px;height:20px;background:#474747"></div>
<div class="t" style="left:84px;top:108.4px;color:#dedede">R_legUpper_CPT</div>
<svg style="left:67px;top:110px" width="7" height="6" viewBox="-0.6 -0.9 7 6"><path d="M0 0H7L3.5 5.7Z" fill="#717171"/></svg>
<svg style="left:270px;top:105px;opacity:1" width="15" height="15" viewBox="-8.1 -7.9 15 15">
<path d="M0 -6.9L6.5 -5.1V1.4Q6.3 4.3 0 6.8Q-6.3 4.3 -6.5 1.4V-5.1Z" fill="#545454" stroke="#747474" stroke-width="1.7" stroke-linejoin="round"/>
<path d="M0 -6.4V-3M-5.8 2.8L-3.2 1.4M5.8 2.8L3.2 1.4" stroke="#747474" stroke-width=".9"/>
<path d="M0 -3.6L3.7 -2.2L0 -.8L-3.7 -2.2Z" fill="#929292"/><path d="M-3.7 -2.2L0 -.8V4.1L-3.7 2.4Z" fill="#848484"/><path d="M3.7 -2.2L0 -.8V4.1L3.7 2.4Z" fill="#666"/></svg>
<svg style="left:326px;top:108px" width="14.8" height="8.4" viewBox="-7.8 -5.1 14.8 8.4"><path d="M-7.3 .1Q-3.8 -4.1 0 -4.1Q3.8 -4.1 7.3 .1Q3.8 4.1 0 4.1Q-3.8 4.1 -7.3 .1Z" fill="#a2a2a2"/><circle cx="-.1" cy="-.5" r="3" fill="#2c2c2c"/><circle cx="-1.4" cy="-1.7" r=".95" fill="#a2a2a2" opacity=".9"/></svg>
<div class="a" style="left:0;top:123px;width:351px;height:20px;background:#414141"></div>
<div class="t" style="left:104px;top:128.4px;color:#dedede">R_legUpper003_REN</div>
<svg style="left:326px;top:128px" width="14.8" height="8.4" viewBox="-7.8 -5.1 14.8 8.4"><path d="M-7.3 .1Q-3.8 -4.1 0 -4.1Q3.8 -4.1 7.3 .1Q3.8 4.1 0 4.1Q-3.8 4.1 -7.3 .1Z" fill="#a2a2a2"/><circle cx="-.1" cy="-.5" r="3" fill="#2c2c2c"/><circle cx="-1.4" cy="-1.7" r=".95" fill="#a2a2a2" opacity=".9"/></svg>
<div class="a" style="left:0;top:143px;width:351px;height:20px;background:#474747"></div>
<div class="t" style="left:104px;top:148.4px;color:#dedede">R_legUpper002_REN</div>
<svg style="left:326px;top:148px" width="14.8" height="8.4" viewBox="-7.8 -5.1 14.8 8.4"><path d="M-7.3 .1Q-3.8 -4.1 0 -4.1Q3.8 -4.1 7.3 .1Q3.8 4.1 0 4.1Q-3.8 4.1 -7.3 .1Z" fill="#a2a2a2"/><circle cx="-.1" cy="-.5" r="3" fill="#2c2c2c"/><circle cx="-1.4" cy="-1.7" r=".95" fill="#a2a2a2" opacity=".9"/></svg>
<div class="a" style="left:0;top:163px;width:351px;height:20px;background:#414141"></div>
<div class="t" style="left:104px;top:168.4px;color:#dedede">R_legUpper001_REN</div>
<svg style="left:326px;top:168px" width="14.8" height="8.4" viewBox="-7.8 -5.1 14.8 8.4"><path d="M-7.3 .1Q-3.8 -4.1 0 -4.1Q3.8 -4.1 7.3 .1Q3.8 4.1 0 4.1Q-3.8 4.1 -7.3 .1Z" fill="#a2a2a2"/><circle cx="-.1" cy="-.5" r="3" fill="#2c2c2c"/><circle cx="-1.4" cy="-1.7" r=".95" fill="#a2a2a2" opacity=".9"/></svg>
<div class="a" style="left:0;top:183px;width:351px;height:20px;background:#474747"></div>
<div class="t" style="left:104px;top:188.4px;color:#dedede">R_legUpper004_REN</div>
<svg style="left:326px;top:188px" width="14.8" height="8.4" viewBox="-7.8 -5.1 14.8 8.4"><path d="M-7.3 .1Q-3.8 -4.1 0 -4.1Q3.8 -4.1 7.3 .1Q3.8 4.1 0 4.1Q-3.8 4.1 -7.3 .1Z" fill="#a2a2a2"/><circle cx="-.1" cy="-.5" r="3" fill="#2c2c2c"/><circle cx="-1.4" cy="-1.7" r=".95" fill="#a2a2a2" opacity=".9"/></svg>
<div class="a" style="left:0;top:203px;width:351px;height:20px;background:#414141"></div>
<div class="t" style="left:84px;top:208.4px;color:#dedede">R_legLower_GRP</div>
<svg style="left:67px;top:210px" width="7" height="6" viewBox="-0.6 -0.9 7 6"><path d="M0 0H7L3.5 5.7Z" fill="#717171"/></svg>
<svg style="left:270px;top:205px;opacity:1" width="15" height="15" viewBox="-8.1 -7.9 15 15">
<path d="M0 -6.9L6.5 -5.1V1.4Q6.3 4.3 0 6.8Q-6.3 4.3 -6.5 1.4V-5.1Z" fill="#545454" stroke="#747474" stroke-width="1.7" stroke-linejoin="round"/>
<path d="M0 -6.4V-3M-5.8 2.8L-3.2 1.4M5.8 2.8L3.2 1.4" stroke="#747474" stroke-width=".9"/>
<path d="M0 -3.6L3.7 -2.2L0 -.8L-3.7 -2.2Z" fill="#929292"/><path d="M-3.7 -2.2L0 -.8V4.1L-3.7 2.4Z" fill="#848484"/><path d="M3.7 -2.2L0 -.8V4.1L3.7 2.4Z" fill="#666"/></svg>
<svg style="left:326px;top:208px" width="14.8" height="8.4" viewBox="-7.8 -5.1 14.8 8.4"><path d="M-7.3 .1Q-3.8 -4.1 0 -4.1Q3.8 -4.1 7.3 .1Q3.8 4.1 0 4.1Q-3.8 4.1 -7.3 .1Z" fill="#a2a2a2"/><circle cx="-.1" cy="-.5" r="3" fill="#2c2c2c"/><circle cx="-1.4" cy="-1.7" r=".95" fill="#a2a2a2" opacity=".9"/></svg>
<div class="a" style="left:0;top:223px;width:351px;height:20px;background:#474747"></div>
<div class="t" style="left:104px;top:228.4px;color:#dedede">R_legLower_CPT</div>
<svg style="left:87px;top:230px" width="7" height="6" viewBox="-0.6 -0.9 7 6"><path d="M0 0H7L3.5 5.7Z" fill="#717171"/></svg>
<svg style="left:270px;top:225px;opacity:1" width="15" height="15" viewBox="-8.1 -7.9 15 15">
<path d="M0 -6.9L6.5 -5.1V1.4Q6.3 4.3 0 6.8Q-6.3 4.3 -6.5 1.4V-5.1Z" fill="#545454" stroke="#747474" stroke-width="1.7" stroke-linejoin="round"/>
<path d="M0 -6.4V-3M-5.8 2.8L-3.2 1.4M5.8 2.8L3.2 1.4" stroke="#747474" stroke-width=".9"/>
<path d="M0 -3.6L3.7 -2.2L0 -.8L-3.7 -2.2Z" fill="#929292"/><path d="M-3.7 -2.2L0 -.8V4.1L-3.7 2.4Z" fill="#848484"/><path d="M3.7 -2.2L0 -.8V4.1L3.7 2.4Z" fill="#666"/></svg>
<svg style="left:326px;top:228px" width="14.8" height="8.4" viewBox="-7.8 -5.1 14.8 8.4"><path d="M-7.3 .1Q-3.8 -4.1 0 -4.1Q3.8 -4.1 7.3 .1Q3.8 4.1 0 4.1Q-3.8 4.1 -7.3 .1Z" fill="#a2a2a2"/><circle cx="-.1" cy="-.5" r="3" fill="#2c2c2c"/><circle cx="-1.4" cy="-1.7" r=".95" fill="#a2a2a2" opacity=".9"/></svg>
<div class="a" style="left:0;top:243px;width:351px;height:20px;background:#414141"></div>
<div class="t" style="left:124px;top:248.4px;color:#dedede">R_legLower001_REN</div>
<svg style="left:326px;top:248px" width="14.8" height="8.4" viewBox="-7.8 -5.1 14.8 8.4"><path d="M-7.3 .1Q-3.8 -4.1 0 -4.1Q3.8 -4.1 7.3 .1Q3.8 4.1 0 4.1Q-3.8 4.1 -7.3 .1Z" fill="#a2a2a2"/><circle cx="-.1" cy="-.5" r="3" fill="#2c2c2c"/><circle cx="-1.4" cy="-1.7" r=".95" fill="#a2a2a2" opacity=".9"/></svg>
<div class="a" style="left:0;top:263px;width:351px;height:20px;background:#474747"></div>
<div class="t" style="left:124px;top:268.4px;color:#dedede">R_legLower005_REN</div>
<svg style="left:326px;top:268px" width="14.8" height="8.4" viewBox="-7.8 -5.1 14.8 8.4"><path d="M-7.3 .1Q-3.8 -4.1 0 -4.1Q3.8 -4.1 7.3 .1Q3.8 4.1 0 4.1Q-3.8 4.1 -7.3 .1Z" fill="#a2a2a2"/><circle cx="-.1" cy="-.5" r="3" fill="#2c2c2c"/><circle cx="-1.4" cy="-1.7" r=".95" fill="#a2a2a2" opacity=".9"/></svg>
<div class="a" style="left:0;top:283px;width:351px;height:20px;background:#414141"></div>
<div class="t" style="left:124px;top:288.4px;color:#dedede">R_legLower002_REN</div>
<svg style="left:326px;top:288px" width="14.8" height="8.4" viewBox="-7.8 -5.1 14.8 8.4"><path d="M-7.3 .1Q-3.8 -4.1 0 -4.1Q3.8 -4.1 7.3 .1Q3.8 4.1 0 4.1Q-3.8 4.1 -7.3 .1Z" fill="#a2a2a2"/><circle cx="-.1" cy="-.5" r="3" fill="#2c2c2c"/><circle cx="-1.4" cy="-1.7" r=".95" fill="#a2a2a2" opacity=".9"/></svg>
<div class="a" style="left:0;top:303px;width:351px;height:20px;background:#474747"></div>
<div class="t" style="left:124px;top:308.4px;color:#dedede">R_legLower003_REN</div>
<svg style="left:326px;top:308px" width="14.8" height="8.4" viewBox="-7.8 -5.1 14.8 8.4"><path d="M-7.3 .1Q-3.8 -4.1 0 -4.1Q3.8 -4.1 7.3 .1Q3.8 4.1 0 4.1Q-3.8 4.1 -7.3 .1Z" fill="#a2a2a2"/><circle cx="-.1" cy="-.5" r="3" fill="#2c2c2c"/><circle cx="-1.4" cy="-1.7" r=".95" fill="#a2a2a2" opacity=".9"/></svg>
<div class="a" style="left:0;top:323px;width:351px;height:20px;background:#414141"></div>
<div class="t" style="left:124px;top:328.4px;color:#dedede">R_legLower004_REN</div>
<svg style="left:326px;top:328px" width="14.8" height="8.4" viewBox="-7.8 -5.1 14.8 8.4"><path d="M-7.3 .1Q-3.8 -4.1 0 -4.1Q3.8 -4.1 7.3 .1Q3.8 4.1 0 4.1Q-3.8 4.1 -7.3 .1Z" fill="#a2a2a2"/><circle cx="-.1" cy="-.5" r="3" fill="#2c2c2c"/><circle cx="-1.4" cy="-1.7" r=".95" fill="#a2a2a2" opacity=".9"/></svg>
<div class="a" style="left:0;top:343px;width:351px;height:20px;background:#474747"></div>
<div class="t" style="left:104px;top:348.4px;color:#dedede">R_foot_GRP</div>
<svg style="left:87px;top:350px" width="7" height="6" viewBox="-0.6 -0.9 7 6"><path d="M0 0H7L3.5 5.7Z" fill="#717171"/></svg>
<svg style="left:270px;top:345px;opacity:1" width="15" height="15" viewBox="-8.1 -7.9 15 15">
<path d="M0 -6.9L6.5 -5.1V1.4Q6.3 4.3 0 6.8Q-6.3 4.3 -6.5 1.4V-5.1Z" fill="#545454" stroke="#747474" stroke-width="1.7" stroke-linejoin="round"/>
<path d="M0 -6.4V-3M-5.8 2.8L-3.2 1.4M5.8 2.8L3.2 1.4" stroke="#747474" stroke-width=".9"/>
<path d="M0 -3.6L3.7 -2.2L0 -.8L-3.7 -2.2Z" fill="#929292"/><path d="M-3.7 -2.2L0 -.8V4.1L-3.7 2.4Z" fill="#848484"/><path d="M3.7 -2.2L0 -.8V4.1L3.7 2.4Z" fill="#666"/></svg>
<svg style="left:326px;top:348px" width="14.8" height="8.4" viewBox="-7.8 -5.1 14.8 8.4"><path d="M-7.3 .1Q-3.8 -4.1 0 -4.1Q3.8 -4.1 7.3 .1Q3.8 4.1 0 4.1Q-3.8 4.1 -7.3 .1Z" fill="#a2a2a2"/><circle cx="-.1" cy="-.5" r="3" fill="#2c2c2c"/><circle cx="-1.4" cy="-1.7" r=".95" fill="#a2a2a2" opacity=".9"/></svg>
<div class="a" style="left:266.4px;top:0;width:1px;height:356px;background:rgba(50,50,50,.55)"></div>
<div class="a" style="left:294.4px;top:0;width:1px;height:356px;background:rgba(50,50,50,.55)"></div>
<div class="a" style="left:322.4px;top:0;width:1px;height:356px;background:rgba(50,50,50,.55)"></div>
<div class="a" style="left:355px;top:5px;width:8px;height:320px;background:#3c3c3c;border-radius:4px"></div>
<div class="a" style="left:355px;top:5px;width:8px;height:100px;background:#5f5f5f;border-radius:4px"></div>
<svg style="left:355px;top:330px" width="7.4" height="6" viewBox="-0.4 -0.6 7.4 6"><path d="M0 6H7.4L3.7 0Z" fill="#9c9c9c"/></svg>
<svg style="left:355px;top:344px" width="7.4" height="6" viewBox="-0.4 -0.4 7.4 6"><path d="M0 0H7.4L3.7 6Z" fill="#9c9c9c"/></svg>
</div>
<div class="a" style="left:11.4px;top:952.8px;width:4px;height:4px;border-radius:50%;background:#393939"></div>
<div class="a" style="left:11.4px;top:958.8px;width:4px;height:4px;border-radius:50%;background:#393939"></div>
<div class="a" style="left:11.4px;top:964.9px;width:4px;height:4px;border-radius:50%;background:#393939"></div>
<div class="fld" style="left:18.5px;top:952.4px;width:31.5px;height:16.6px"></div>
<div class="t " style="left:21.7px;top:956.3px;">1</div>
<div class="fld" style="left:53.4px;top:952.4px;width:31.6px;height:16.6px"></div>
<div class="t " style="left:56.6px;top:956.3px;">1</div>
<div class="a" style="left:88px;top:951.6px;width:2px;height:18.6px;background:#f0d81e"></div>
<svg style="left:0;top:948px" width="1280" height="33" viewBox="0 948 1280 33"><path d="M98.00 964.2V970M108.38 964.2V970M118.76 964.2V970M129.14 964.2V970M139.52 959.6V970M149.91 964.2V970M160.29 964.2V970M170.67 964.2V970M181.05 964.2V970M191.43 955.2V970M201.81 964.2V970M212.19 964.2V970M222.57 964.2V970M232.95 964.2V970M243.33 959.6V970M253.72 964.2V970M264.10 964.2V970M274.48 964.2V970M284.86 964.2V970M295.24 955.2V970M305.62 964.2V970M316.00 964.2V970M326.38 964.2V970M336.76 964.2V970M347.14 959.6V970M357.52 964.2V970M367.91 964.2V970M378.29 964.2V970M388.67 964.2V970M399.05 955.2V970M409.43 964.2V970M419.81 964.2V970M430.19 964.2V970M440.57 964.2V970M450.95 959.6V970M461.34 964.2V970M471.72 964.2V970M482.10 964.2V970M492.48 964.2V970M502.86 955.2V970M513.24 964.2V970M523.62 964.2V970M534.00 964.2V970M544.38 964.2V970M554.76 959.6V970M565.14 964.2V970M575.53 964.2V970M585.91 964.2V970M596.29 964.2V970M606.67 955.2V970M617.05 964.2V970M627.43 964.2V970M637.81 964.2V970M648.19 964.2V970M658.57 959.6V970M668.96 964.2V970M679.34 964.2V970M689.72 964.2V970M700.10 964.2V970M710.48 955.2V970M720.86 964.2V970M731.24 964.2V970M741.62 964.2V970M752.00 964.2V970M762.38 959.6V970M772.76 964.2V970M783.15 964.2V970M793.53 964.2V970M803.91 964.2V970M814.29 955.2V970M824.67 964.2V970M835.05 964.2V970M845.43 964.2V970M855.81 964.2V970M866.19 959.6V970M876.58 964.2V970M886.96 964.2V970M897.34 964.2V970M907.72 964.2V970M918.10 955.2V970M928.48 964.2V970M938.86 964.2V970M949.24 964.2V970M959.62 964.2V970M970.00 959.6V970M980.38 964.2V970M990.77 964.2V970M1001.15 964.2V970M1011.53 964.2V970M1021.91 955.2V970M1032.29 964.2V970M1042.67 964.2V970M1053.05 964.2V970M1063.43 964.2V970M1073.81 959.6V970M1084.20 964.2V970M1094.58 964.2V970M1104.96 964.2V970M1115.34 964.2V970" stroke="#222" stroke-width="1.8"/></svg>
<div class="t b" style="left:94.3px;top:956.6px;color:#ecd620;font-size:10px;-webkit-text-stroke:0">1</div>
<svg style="left:1119px;top:953px" width="36" height="14" viewBox="1119 953 36 14"><g fill="#ababab"><rect x="1119.9" y="953.8" width="2.1" height="12.8"/><path d="M1126.4 955.6L1121.6 960.1L1126.4 964.6Z"/><path d="M1131 954.8L1140.4 960.5L1131 966.6L1133.2 960.6Z"/><rect x="1151.2" y="953.8" width="2.1" height="12.8"/><path d="M1146.8 955.6L1151.6 960.1L1146.8 964.6Z"/></g></svg>
<div class="fld" style="left:1157.3px;top:952.4px;width:40.7px;height:16.6px"></div>
<div class="t " style="left:1160.5px;top:956.3px;">1</div>
<div class="fld" style="left:1201.4px;top:952.4px;width:31.7px;height:16.6px"></div>
<div class="t " style="left:1204.6000000000001px;top:956.3px;">100</div>
<div class="fld" style="left:1236.4px;top:952.4px;width:31.7px;height:16.6px"></div>
<div class="t " style="left:1239.6000000000001px;top:956.3px;">100</div>
</div></body></html>
